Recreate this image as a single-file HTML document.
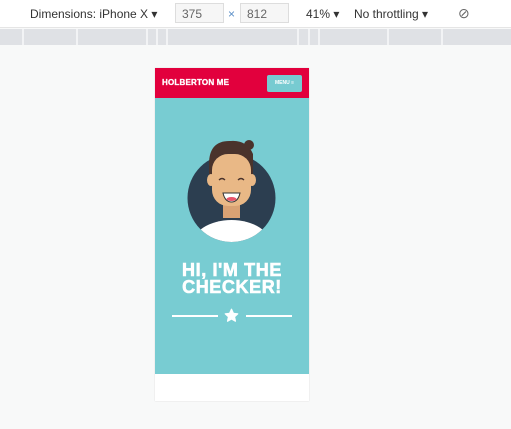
<!DOCTYPE html>
<html><head><style>
body{margin:0;width:511px;height:429px;background:#f8f9f9;font-family:"Liberation Sans",sans-serif;position:relative;overflow:hidden}
.tb{position:absolute;left:0;top:0;width:511px;height:27px;background:#fff;border-bottom:1px solid #e5e5e5;font-size:12px;color:#333}
.tb span{position:absolute;top:7px}
.box{position:absolute;top:3px;height:20px;border:1px solid #ddd;background:#f6f6f6;box-sizing:border-box;color:#666;padding:3px 6px;font-size:12px}
.ruler{position:absolute;left:0;top:29px;width:511px;height:16px;background:#dfe1e5}
.ruler i{position:absolute;top:0;width:2px;height:16px;background:#f2f3f5}
.dev{position:absolute;left:155px;top:68px;width:154px;height:333px;background:#fff;box-shadow:0 0 1px #ccc}
.hd{position:absolute;left:0;top:0;width:154px;height:30px;background:#e2003d}
.hd b{position:absolute;left:7px;top:10px;color:#fff;font-size:8px;font-weight:900;letter-spacing:0.2px;-webkit-text-stroke:0.3px #fff}
.mn{position:absolute;left:112px;top:7px;width:35px;height:17px;background:#77cbd1;border-radius:2px;color:#fff;font-size:5px;font-weight:bold;text-align:center;line-height:17px}
.hero{position:absolute;left:0;top:30px;width:154px;height:276px;background:#78ccd2}
h1{position:absolute;left:0;top:164px;width:154px;margin:0;text-align:center;color:#fff;font-size:18px;line-height:17px;font-weight:900;letter-spacing:0.6px;-webkit-text-stroke:0.6px #fff}
</style></head><body>
<div class="tb">
<span style="left:30px">Dimensions: iPhone X ▾</span>
<div class="box" style="left:175px;width:49px">375</div>
<span style="left:228px;color:#5b8fc7">×</span>
<div class="box" style="left:240px;width:49px">812</div>
<span style="left:306px">41% ▾</span>
<span style="left:354px">No throttling ▾</span>
<span style="left:458px;font-size:14px;top:5px;color:#666">⊘</span>
</div>
<div class="ruler"><i style="left:22px"></i><i style="left:76px"></i><i style="left:146px"></i><i style="left:156px"></i><i style="left:166px"></i><i style="left:297px"></i><i style="left:308px"></i><i style="left:318px"></i><i style="left:387px"></i><i style="left:441px"></i></div>
<div class="dev">
<div class="hd"><b>HOLBERTON ME</b><div class="mn">MENU ≡</div></div>
<div class="hero">
<svg style="position:absolute;left:0;top:0" width="154" height="150" viewBox="0 0 154 150">
<defs><clipPath id="c"><circle cx="76.5" cy="100" r="44"/></clipPath></defs>
<circle cx="76.5" cy="100" r="44" fill="#2c3e50"/>
<g clip-path="url(#c)">
<ellipse cx="76.5" cy="148" rx="40" ry="26" fill="#fff"/>
<rect x="68" y="104" width="17" height="16" fill="#d9a274"/>
</g>
<path d="M54 66 Q54 42 76 43 Q92 42 98 56 L98 76 L54 76 Z" fill="#4a332c"/>
<circle cx="94" cy="47" r="5" fill="#4a332c"/>
<rect x="57" y="56" width="39" height="52" rx="16" fill="#e9b886"/>
<ellipse cx="56" cy="82" rx="4" ry="6" fill="#e9b886"/>
<ellipse cx="97" cy="82" rx="4" ry="6" fill="#e9b886"/>
<path d="M56 68 Q60 53 76 54 Q92 53 97 68 L97 56 Q90 45 76 45 Q60 45 56 57Z" fill="#4a332c"/>
<path d="M64 82 q3 -3 6 0 M83 82 q3 -3 6 0" stroke="#4a332c" stroke-width="1.3" fill="none"/>
<path d="M68 95 h17 q-2 9 -8.5 9 q-6.5 0 -8.5 -9z" fill="#fff" stroke="#333" stroke-width="1"/>
<ellipse cx="76.5" cy="101" rx="5" ry="2" fill="#e8546b"/>
</svg>
<h1>HI, I'M THE<br>CHECKER!</h1>
<div style="position:absolute;left:17px;top:217px;width:46px;height:2px;background:#fff"></div>
<div style="position:absolute;left:91px;top:217px;width:46px;height:2px;background:#fff"></div>
<svg style="position:absolute;left:69px;top:210px" width="15" height="15" viewBox="0 0 24 24"><path d="M12 2l3 6.5 7 .8-5.2 4.8 1.5 7L12 17.6 5.7 21.1l1.5-7L2 9.3l7-.8z" fill="#fff" stroke="#fff" stroke-linejoin="round" stroke-width="2"/></svg>
</div>
</div>
</body></html>
